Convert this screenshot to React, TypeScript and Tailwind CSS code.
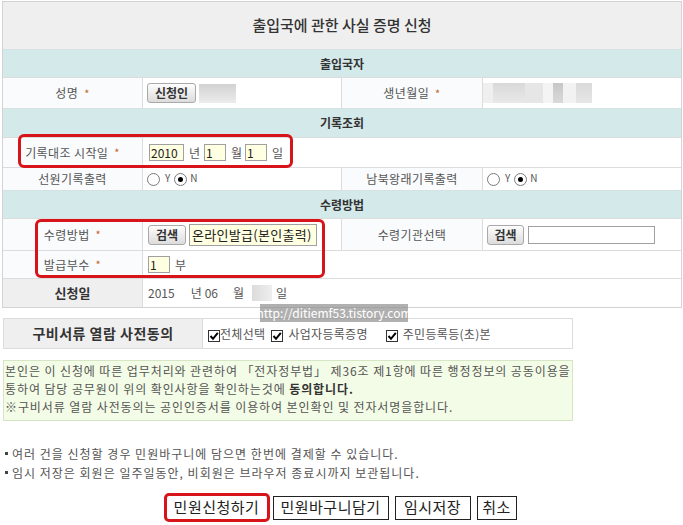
import React from "react";

const F = "font-['Noto_Sans_CJK_KR','Noto_Sans',sans-serif]";

function Req() {
  return <span className="ml-[6px] text-[11px] text-[#c4622d]">*</span>;
}

function LabelCell({
  children,
  wide = false,
  gray = false,
}: {
  children: React.ReactNode;
  wide?: boolean;
  gray?: boolean;
}) {
  return (
    <div
      className={`${wide ? "w-[141px]" : "w-[140px]"} ${
        gray ? "bg-[#efefef] text-[13px] font-bold text-[#333]" : "bg-[#f9fbfc] text-[12px] text-[#555] tracking-[0.4px]"
      } shrink-0 border-r border-[#dcdcdc] flex items-center justify-center`}
    >
      {children}
    </div>
  );
}

function Section({ h, children }: { h: string; children: React.ReactNode }) {
  return (
    <div
      className={`${h} border-t border-[#d6e2e2] bg-[#d4e9ea] flex items-center justify-center text-[12px] font-bold text-[#333]`}
    >
      {children}
    </div>
  );
}

function GrayBtn({ w, children }: { w: string; children: React.ReactNode }) {
  return (
    <span
      className={`${w} h-[20px] inline-flex items-center justify-center rounded-[3px] border border-[#a9a9a9] bg-linear-to-b from-[#fdfdfd] to-[#dcdcdc] text-[12px] font-bold text-[#333] leading-none`}
    >
      {children}
    </span>
  );
}

function YInput({ w, children }: { w: string; children?: React.ReactNode }) {
  return (
    <span
      className={`${w} h-[17px] inline-flex items-center border border-[#a0a0a0] bg-[#ffffe1] pl-[1px] text-[12px] text-[#222] leading-none`}
    >
      {children}
    </span>
  );
}

function Radio({ checked = false }: { checked?: boolean }) {
  return (
    <span className="w-[13px] h-[13px] rounded-full border border-[#7a7a7a] bg-white inline-flex items-center justify-center">
      {checked && <span className="w-[5px] h-[5px] rounded-full bg-black" />}
    </span>
  );
}

function RadioYN() {
  return (
    <div className="flex items-center h-full text-[10px] text-[#555]">
      <Radio />
      <span className="ml-[5px] mr-[4px] -translate-y-[2px]">Y</span>
      <Radio checked />
      <span className="ml-[3px] -translate-y-[2px]">N</span>
    </div>
  );
}

function Check() {
  return (
    <span className="w-[12px] h-[12px] border border-[#333] bg-white inline-flex items-center justify-center translate-y-[2px]">
      <svg width="10" height="10" viewBox="0 0 10 10">
        <path d="M1.5 5 L4 7.8 L8.8 1.8" fill="none" stroke="#000" strokeWidth="2" />
      </svg>
    </span>
  );
}

const rowB = "flex border-t border-[#dcdcdc]";
const valB = "w-[199px] shrink-0 border-r border-[#dcdcdc] flex items-center";

export default function App() {
  return (
    <div className={`relative w-[683px] h-[525px] overflow-hidden bg-white ${F}`}>
      <div className="ml-[2px] mt-[1px] w-[680px] border border-[#d3d3d3]">
        <div className="h-[47px] bg-[#efefef] flex items-center justify-center text-[15px] text-[#333] font-medium">
          출입국에 관한 사실 증명 신청
        </div>
        <Section h="h-[28px]">출입국자</Section>
        <div className={`${rowB} h-[31px]`}>
          <LabelCell>
            성명
            <Req />
          </LabelCell>
          <div className={`${valB} pl-[4px] gap-[3px]`}>
            <GrayBtn w="w-[49px]">신청인</GrayBtn>
            <span className="w-[37px] h-[19px] bg-linear-to-b from-[#d2d2d2] to-[#ececec]" />
          </div>
          <LabelCell wide>
            생년월일
            <Req />
          </LabelCell>
          <div className="flex-1 flex items-center">
            <span className="w-[10px] h-[20px] bg-[#efefef]" />
            <span className="w-[32px] h-[20px] bg-linear-to-b from-[#d9d9d9] to-[#e9e9e9]" />
            <span className="w-[18px] h-[20px] bg-[#e6e6e6]" />
            <span className="w-[10px] h-[20px] bg-[#f4f4f4]" />
            <span className="w-[10px] h-[20px] bg-linear-to-b from-[#c6c6c6] to-[#dadada]" />
            <span className="w-[13px] h-[20px] bg-[#f2f2f2]" />
            <span className="w-[16px] h-[20px] bg-linear-to-b from-[#dadada] to-[#e6e6e6]" />
          </div>
        </div>
        <Section h="h-[29px]">기록조회</Section>
        <div className={`${rowB} h-[30px]`}>
          <LabelCell>
            기록대조 시작일
            <Req />
          </LabelCell>
          <div className="flex-1 flex items-center pl-[6px] text-[12px] text-[#555]">
            <YInput w="w-[35px]">2010</YInput>
            <span className="ml-[5px] mr-[4px]">년</span>
            <YInput w="w-[22px]">1</YInput>
            <span className="ml-[5px] mr-[3px]">월</span>
            <YInput w="w-[22px]">1</YInput>
            <span className="ml-[5px]">일</span>
          </div>
        </div>
        <div className={`${rowB} h-[23px]`}>
          <LabelCell>선원기록출력</LabelCell>
          <div className={`${valB} pl-[4px]`}>
            <RadioYN />
          </div>
          <LabelCell wide>남북왕래기록출력</LabelCell>
          <div className="flex-1 flex items-center pl-[4px]">
            <RadioYN />
          </div>
        </div>
        <Section h="h-[28px]">수령방법</Section>
        <div className={`${rowB} h-[32px]`}>
          <LabelCell>
            수령방법
            <Req />
          </LabelCell>
          <div className={`${valB} pl-[5px] gap-[3px]`}>
            <GrayBtn w="w-[38px]">검색</GrayBtn>
            <span className="w-[128px] h-[22px] inline-flex items-center border border-[#a0a0a0] bg-[#ffffe1] pl-[2px] text-[13px] text-[#222] leading-none whitespace-nowrap overflow-hidden tracking-[0.3px]">
              온라인발급(본인출력)
            </span>
          </div>
          <LabelCell wide>수령기관선택</LabelCell>
          <div className="flex-1 flex items-center pl-[4px] gap-[4px]">
            <GrayBtn w="w-[37px]">검색</GrayBtn>
            <span className="w-[127px] h-[18px] border border-[#a0a0a0] bg-white" />
          </div>
        </div>
        <div className={`${rowB} h-[28px]`}>
          <LabelCell>
            발급부수
            <Req />
          </LabelCell>
          <div className="flex-1 flex items-center pl-[5px] text-[12px] text-[#555]">
            <YInput w="w-[22px]">1</YInput>
            <span className="ml-[5px]">부</span>
          </div>
        </div>
        <div className={`${rowB} h-[29px]`}>
          <LabelCell gray>신청일</LabelCell>
          <div className="flex-1 flex items-center pl-[5px] text-[12px] text-[#555]">
            <span>2015</span>
            <span className="ml-[16px]">년</span>
            <span className="ml-[3px]">06</span>
            <span className="ml-[15px]">월</span>
            <span className="ml-[8px] w-[20px] h-[16px] bg-linear-to-r from-[#dcdcdc] to-[#eeeeee]" />
            <span className="ml-[4px]">일</span>
          </div>
        </div>
      </div>

      <div className="ml-[3px] mt-[10px] w-[570px] h-[31px] flex border border-[#dcdcdc]">
        <div className="w-[199px] shrink-0 bg-[#efefef] border-r border-[#dcdcdc] flex items-center justify-center text-[14px] font-bold text-[#333] tracking-[0.5px]">
          구비서류 열람 사전동의
        </div>
        <div className="flex-1 flex items-center pl-[5px] text-[12px] text-[#555] tracking-[0.3px]">
          <Check />
          <span>전체선택</span>
          <span className="ml-[6px]" />
          <Check />
          <span className="ml-[5px]">사업자등록증명</span>
          <span className="ml-[18px]" />
          <Check />
          <span className="ml-[5px]">주민등록등(초)본</span>
        </div>
      </div>

      <div className="ml-[3px] mt-[11px] w-[570px] h-[61px] border border-[#d6e5c3] bg-[#f3fce6] pt-[1px] pl-[1px] text-[12px] leading-[18px] text-[#555] tracking-[0.9px] whitespace-nowrap overflow-hidden">
        <p>본인은 이 신청에 따른 업무처리와 관련하여 「전자정부법」 제36조 제1항에 따른 행정정보의 공동이용을</p>
        <p>
          통하여 담당 공무원이 위의 확인사항을 확인하는것에 <b className="text-[#333]">동의합니다.</b>
        </p>
        <p>※구비서류 열람 사전동의는 공인인증서를 이용하여 본인확인 및 전자서명을합니다.</p>
      </div>

      <div className="mt-[23px] pl-[5px] text-[12px] text-[#555] tracking-[1px]">
        <p className="h-[19px] leading-[19px] flex items-center">
          <span className="w-[3px] h-[3px] bg-[#444] mr-[4px]" />
          여러 건을 신청할 경우 민원바구니에 담으면 한번에 결제할 수 있습니다.
        </p>
        <p className="h-[19px] leading-[19px] flex items-center">
          <span className="w-[3px] h-[3px] bg-[#444] mr-[4px]" />
          임시 저장은 회원은 일주일동안, 비회원은 브라우저 종료시까지 보관됩니다.
        </p>
      </div>

      <div className="mt-[11px] flex items-center justify-center gap-[3px] pr-[3px] text-[15px] text-[#222] tracking-[0.5px]">
        <span className="w-[106px] h-[29px] rounded-[5px] border-[3px] border-[#d7141a] flex items-center justify-center">
          민원신청하기
        </span>
        <span className="w-[116px] h-[24px] border border-[#222] flex items-center justify-center">민원바구니담기</span>
        <span className="ml-[3px] w-[76px] h-[24px] border border-[#222] flex items-center justify-center">임시저장</span>
        <span className="ml-[3px] w-[40px] h-[24px] border border-[#222] flex items-center justify-center">취소</span>
      </div>

      {/* overlays */}
      <div className="absolute left-[260px] top-[304px] w-[148px] h-[18px] bg-[#8f8f8f]/70 flex items-center justify-center text-[12px] text-white leading-none">
        http://ditiemf53.tistory.com
      </div>
      <div className="absolute left-[18px] top-[134px] w-[275px] h-[34px] rounded-[6px] border-[3px] border-[#d7141a]" />
      <div className="absolute left-[35px] top-[219px] w-[290px] h-[59px] rounded-[6px] border-[3px] border-[#d7141a]" />
    </div>
  );
}
